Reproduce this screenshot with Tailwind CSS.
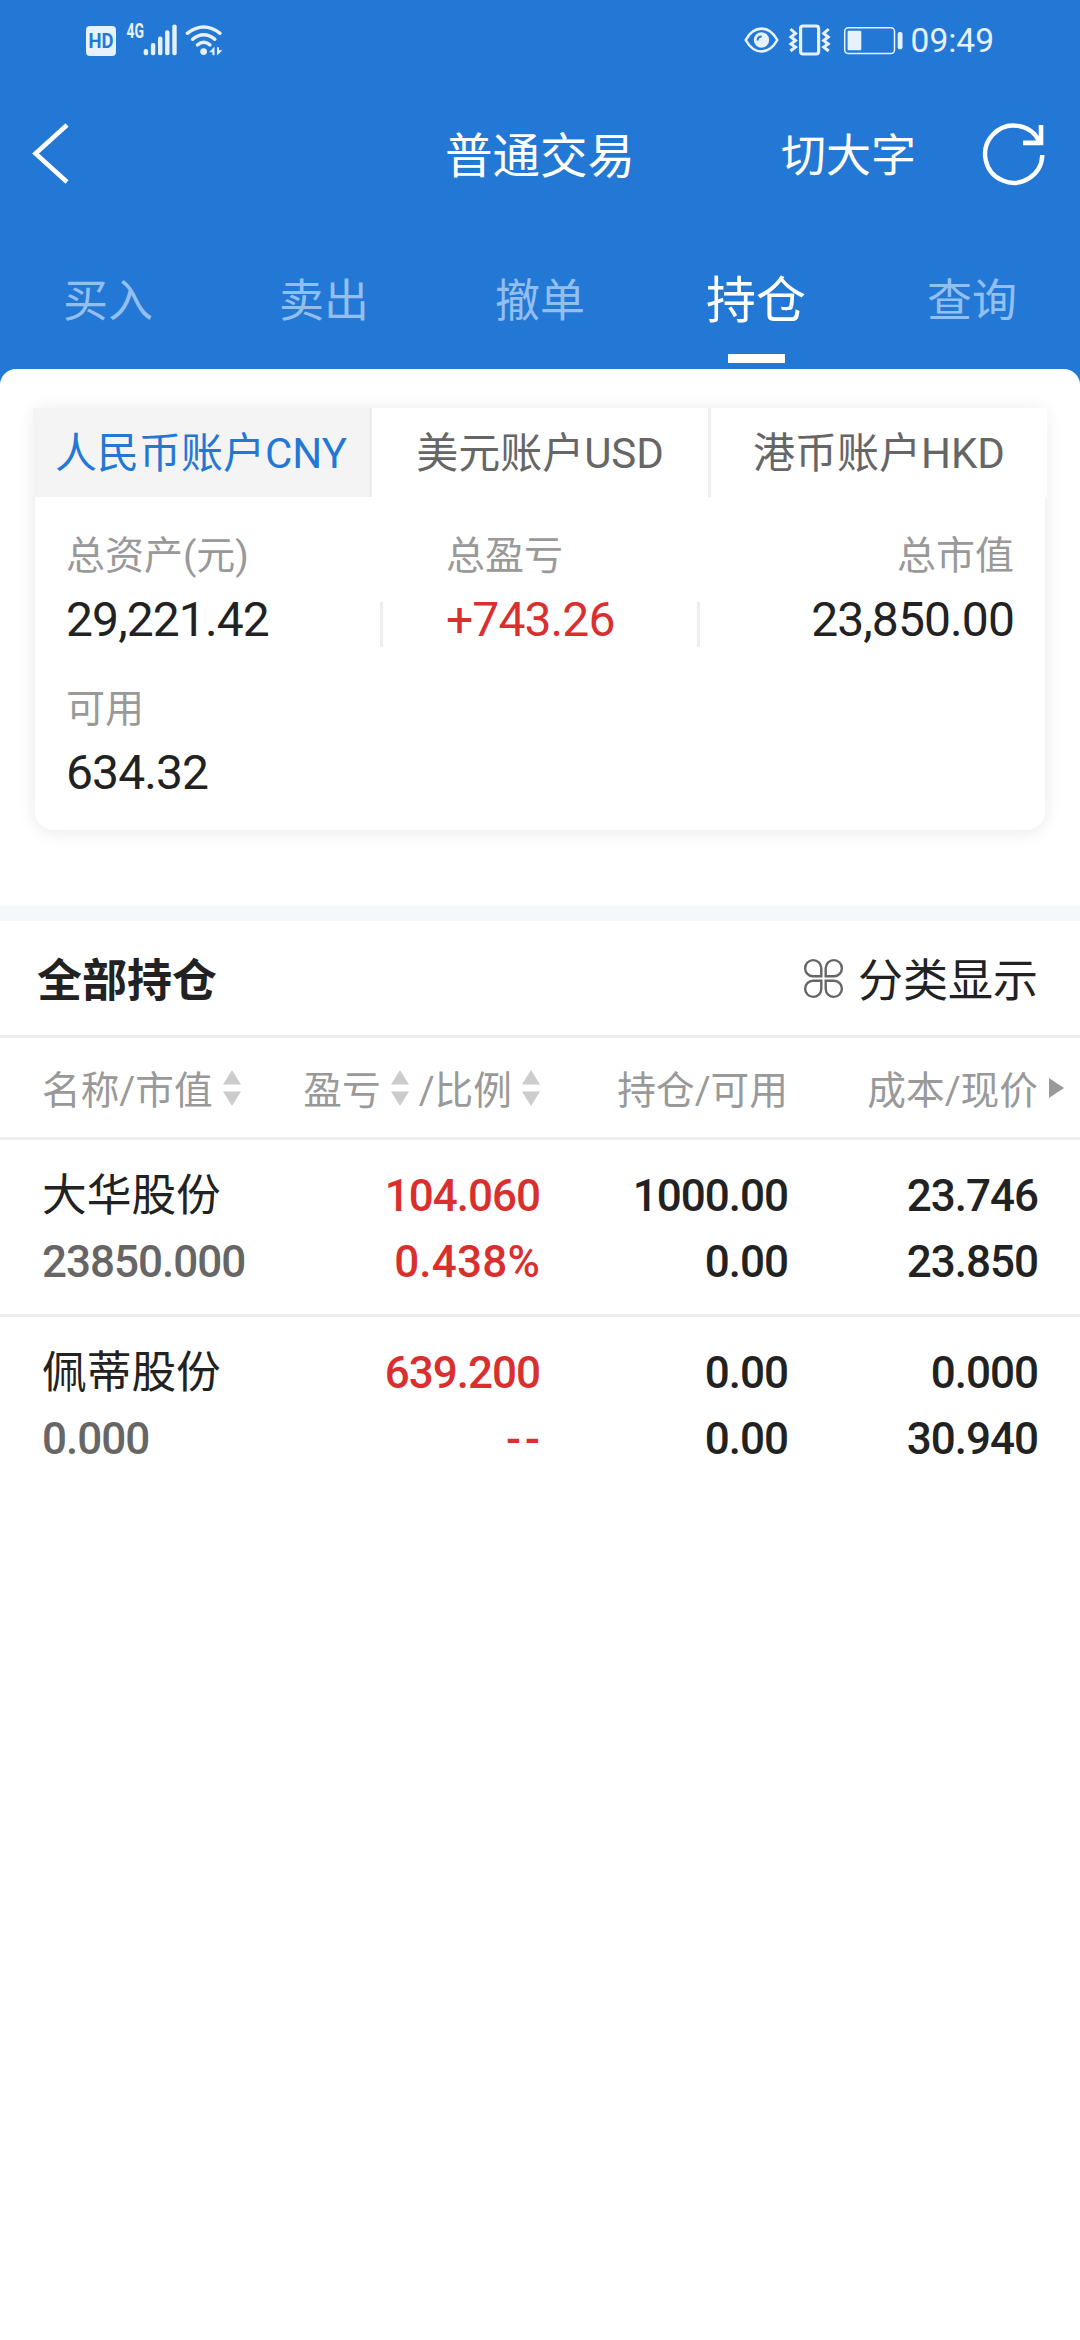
<!DOCTYPE html>
<html lang="zh-CN">
<head>
<meta charset="utf-8">
<title>普通交易</title>
<script src="https://cdn.jsdelivr.net/npm/@tailwindcss/browser@4"></script>
</head>
<body class="w-[1080px] h-[2340px] overflow-hidden bg-white text-[#222] font-['Roboto','Noto_Sans_CJK_SC',sans-serif]">
<div class="flex h-full flex-col">
  <header class="bg-[#2478d5] text-white h-[369px] shrink-0">
    <!-- status bar -->
    <div class="flex h-20 items-center justify-between pl-[86px] pr-[86px] text-[#e6f1fc]">
      <svg width="140" height="52" viewBox="86 14 140 52" fill="currentColor">
        <rect x="86" y="26" width="30" height="30" rx="4"/>
        <text x="88.5" y="48" font-family="Roboto" font-weight="700" font-size="20" fill="#2478d5" textLength="25" lengthAdjust="spacingAndGlyphs">HD</text>
        <text x="126.6" y="38.4" font-family="Roboto" font-weight="700" font-size="19.5" textLength="17.5" lengthAdjust="spacingAndGlyphs">4G</text>
        <rect x="143.7" y="49" width="4.4" height="6.3" rx="2"/>
        <rect x="150.9" y="43" width="4.4" height="12.3" rx="2"/>
        <rect x="158" y="36.5" width="4.4" height="18.8" rx="2"/>
        <rect x="165.1" y="30.3" width="4.4" height="25" rx="2"/>
        <rect x="172.3" y="24.6" width="4.4" height="30.7" rx="2"/>
        <g fill="none" stroke="currentColor" stroke-width="3.4" stroke-linecap="round">
          <path d="M187.3 33.3Q203.7 20.6 220.1 33.3"/>
          <path d="M192.5 39.3Q203.7 30.3 214.9 39.3"/>
          <path d="M197.5 44.9Q203.7 39.8 209.9 44.9"/>
        </g>
        <circle cx="203.6" cy="51.6" r="3.4"/>
        <path d="M209 52.2L214.5 46.700V55.2H212.5V52.2ZM222.5 50.2L217 55.5V47.2H219V50.2Z"/>
      </svg>
      <div class="flex items-center gap-[7px]">
        <svg width="160" height="36" viewBox="743 22 160 36" fill="none" stroke="currentColor">
          <path d="M744.7 40C753 24.8 768 24.8 776.3 40C768 55.2 753 55.2 744.7 40Z" stroke-width="2.6" stroke-linejoin="round"/>
          <circle cx="760.5" cy="40" r="7.7" fill="currentColor" stroke="none"/>
          <path d="M756.6 40.5Q756.5 36.5 760.8 36.4" stroke="#2478d5" stroke-width="2"/>
          <rect x="799.6" y="26" width="18" height="28" rx="2.5" stroke-width="3.2"/>
          <path d="M789.5 29L794.5 33.5L790 37L794.5 40.5L790 44L794.5 47L789.5 51M827.7 29L822.7 33.5L827.2 37L822.7 40.5L827.2 44L822.7 47L827.7 51" stroke-width="3"/>
          <rect x="843.7" y="27.7" width="49.8" height="25.7" rx="3.5" stroke-width="1.5"/>
          <rect x="846.6" y="30.7" width="13.7" height="19.6" rx="1" fill="currentColor" stroke="none"/>
          <rect x="896.7" y="32" width="4.8" height="17.3" rx="2" fill="currentColor" stroke="none"/>
        </svg>
        <span class="mt-0.5 text-[33.5px] leading-10">09:49</span>
      </div>
    </div>
    <!-- navigation -->
    <nav class="grid h-[148px] grid-cols-[360px_360px_1fr] items-center">
      <svg class="ml-[30px]" width="42" height="64" viewBox="30 122 42 64" fill="none" stroke="currentColor" stroke-width="4.5"><path d="M67 125L35.5 153.5L67 182"/></svg>
      <h1 class="pt-[5px] text-center text-[47.5px] leading-[60px]">普通交易</h1>
      <div class="flex items-center justify-end gap-[66px] pr-[34px]">
        <span class="pt-[5px] text-[45px] leading-[60px]">切大字</span>
        <svg width="64" height="64" viewBox="982 122 64 64" fill="none" stroke="currentColor" stroke-width="4.4"><path d="M1042.3 155A28.6 28.6 0 1 1 1039.5 141.8"/><path d="M1041 125V142.9H1023" stroke-width="4.6"/></svg>
      </div>
    </nav>
    <!-- trade tabs -->
    <div class="grid grid-cols-5 text-center text-[45px] leading-[60px] text-[#92bff0]">
      <div class="pt-[44px]">买入</div>
      <div class="pt-[44px]">卖出</div>
      <div class="pt-[44px]">撤单</div>
      <div class="flex flex-col items-center pt-[43px] text-[50px] text-white">持仓<span class="mt-[23px] h-[9px] w-[57px] bg-white"></span></div>
      <div class="pt-[44px]">查询</div>
    </div>
  </header>

  <main class="flex-1 bg-[#2478d5]">
    <div class="h-full rounded-t-2xl bg-white pt-[39px]">
      <section class="mx-[33px] h-[422px]">
        <div class="h-full px-0.5">
          <div class="h-full rounded-b-[18px] bg-white shadow-[0_2px_18px_rgba(0,0,0,0.09)]">
            <div class="-mx-0.5 flex h-[89px] bg-white text-center text-[42px] leading-[91px] text-[#666]">
              <div class="w-[339px] border-r-[3px] border-[#eee] bg-[#f4f4f4] text-[#2478d5]">人民币账户CNY</div>
              <div class="w-[339px] border-r-[3px] border-[#eee]">美元账户USD</div>
              <div class="w-[336px]">港币账户HKD</div>
            </div>
            <div class="grid grid-cols-[345px_317px_1fr] pt-[29px] text-[48px] leading-[60px] tracking-[-0.9px]">
              <div class="pl-[31px]">
                <p class="text-[39px] leading-[60px] tracking-normal text-[#999]">总资产(元)</p>
                <p class="mt-[4px]">29,221.42</p>
              </div>
              <div class="flex">
                <i class="mt-[76px] h-[45px] w-[3px] bg-[#eee]"></i>
                <div class="pl-[63px]">
                  <p class="text-[39px] leading-[60px] tracking-normal text-[#999]">总盈亏</p>
                  <p class="mt-[4px] text-[#d9302f]">+743.26</p>
                </div>
              </div>
              <div class="flex justify-between pr-[31px] text-right">
                <i class="mt-[76px] h-[45px] w-[3px] bg-[#eee]"></i>
                <div>
                  <p class="text-[39px] leading-[60px] tracking-normal text-[#999]">总市值</p>
                  <p class="mt-[4px]">23,850.00</p>
                </div>
              </div>
              <div class="pl-[31px] pt-[29px]">
                <p class="text-[39px] leading-[60px] tracking-normal text-[#999]">可用</p>
                <p class="mt-[4px]">634.32</p>
              </div>
            </div>
          </div>
        </div>
      </section>

      <div class="mt-[76px] h-[15px] bg-[#f5f7fa]"></div>

      <section>
        <div class="flex h-[117px] items-center justify-between border-b-[3px] border-[#eee] pl-[37px] pr-[42px] text-[45px] leading-[60px]">
          <h2 class="pt-[7px] font-bold">全部持仓</h2>
          <div class="flex items-center gap-[14px]">
            <svg width="41" height="41" viewBox="0 0 41 41" fill="none" stroke="#666" stroke-width="2.4">
              <path d="M18.3 18.3H10A8.1 8.1 0 1 1 18.3 10Z"/>
              <path d="M22.7 18.3H31A8.1 8.1 0 1 0 22.7 10Z"/>
              <path d="M18.3 22.7H10A8.1 8.1 0 1 0 18.3 31Z"/>
              <path d="M22.7 22.7H31A8.1 8.1 0 1 1 22.7 31Z"/>
            </svg>
            <span class="pt-[7px]">分类显示</span>
          </div>
        </div>

        <div class="grid h-[102px] grid-cols-[250px_290px_248px_1fr] items-center border-b-[3px] border-[#eee] text-[38.7px] leading-[60px] text-[#999]">
          <div class="flex items-center gap-[10px] pl-[42px]"><span class="pt-[6px]">名称/市值</span><svg width="18" height="36" viewBox="0 0 18 36" fill="#ccc"><path d="M9 0L18 14.5H0ZM9 36L18 21.5H0Z"/></svg></div>
          <div class="flex items-center justify-end gap-[10px]"><span class="pt-[6px]">盈亏</span><svg width="18" height="36" viewBox="0 0 18 36" fill="#ccc"><path d="M9 0L18 14.5H0ZM9 36L18 21.5H0Z"/></svg><span class="pt-[6px]">/比例</span><svg width="18" height="36" viewBox="0 0 18 36" fill="#ccc"><path d="M9 0L18 14.5H0ZM9 36L18 21.5H0Z"/></svg></div>
          <div class="pt-[6px] text-right">持仓/可用</div>
          <div class="flex items-center justify-end gap-[11px] pr-4"><span class="pt-[6px]">成本/现价</span><svg width="15" height="20" viewBox="0 0 15 20" fill="#999"><path d="M0 0L15 10L0 20Z"/></svg></div>
        </div>

        <div class="grid h-[177px] grid-cols-[250px_290px_248px_1fr] content-start border-b-[3px] border-[#eee] pt-[23px] text-right text-[44px] font-medium leading-[66px] tracking-[-1px]">
          <div class="pl-[42px] pt-px text-left text-[44.7px] font-normal leading-[65px] tracking-normal">大华股份</div>
          <div class="text-[#d9302f]">104.060</div>
          <div>1000.00</div>
          <div class="pr-[42px]">23.746</div>
          <div class="pl-[42px] text-left text-[#666]">23850.000</div>
          <div class="text-[#d9302f] tracking-[0.2px]">0.438%</div>
          <div>0.00</div>
          <div class="pr-[42px]">23.850</div>
        </div>
        <div class="grid h-[177px] grid-cols-[250px_290px_248px_1fr] content-start pt-[23px] text-right text-[44px] font-medium leading-[66px] tracking-[-1px]">
          <div class="pl-[42px] pt-px text-left text-[44.7px] font-normal leading-[65px] tracking-normal">佩蒂股份</div>
          <div class="text-[#d9302f]">639.200</div>
          <div>0.00</div>
          <div class="pr-[42px]">0.000</div>
          <div class="pl-[42px] text-left text-[#666]">0.000</div>
          <div class="-mr-1 pr-1 tracking-[4px] text-[#d9302f]">-<span class="tracking-normal">-</span></div>
          <div>0.00</div>
          <div class="pr-[42px]">30.940</div>
        </div>
      </section>
    </div>
  </main>
</div>
</body>
</html>
